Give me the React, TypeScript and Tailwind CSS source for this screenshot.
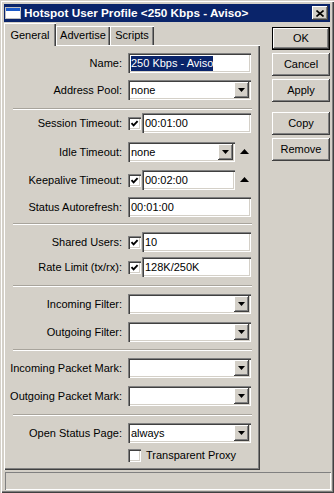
import React from "react";

const sunken =
  "shadow-[inset_1px_1px_0_#808080,inset_2px_2px_0_#404040,inset_-1px_-1px_0_#ffffff,inset_-2px_-2px_0_#d4d0c8]";
const raised =
  "shadow-[inset_-1px_-1px_0_#404040,inset_1px_1px_0_#ffffff,inset_-2px_-2px_0_#808080,inset_2px_2px_0_#d4d0c8]";

function DownTri() {
  return (
    <svg width="7" height="4" viewBox="0 0 7 4">
      <path d="M0 0H7L3.5 4Z" fill="#000" />
    </svg>
  );
}

function UpTri() {
  return (
    <svg width="9" height="5" viewBox="0 0 9 5">
      <path d="M0 5H9L4.5 0Z" fill="#000" />
    </svg>
  );
}

function TextBox({ w, children }: { w: string; children?: React.ReactNode }) {
  return (
    <div className={`${w} h-[20px] bg-white ${sunken} flex items-center pl-[3px] whitespace-nowrap overflow-hidden`}>
      {children}
    </div>
  );
}

function Select({ w, children }: { w: string; children?: React.ReactNode }) {
  return (
    <div className={`${w} h-[20px] bg-white ${sunken} flex p-[2px]`}>
      <div className="flex-1 flex items-center pl-[1px] whitespace-nowrap overflow-hidden">{children}</div>
      <div className={`w-[15px] h-[16px] bg-[#d4d0c8] ${raised} flex items-center justify-center`}>
        <DownTri />
      </div>
    </div>
  );
}

function Check({ checked }: { checked?: boolean }) {
  return (
    <div className={`w-[13px] h-[13px] shrink-0 bg-white ${sunken} flex items-center justify-center`}>
      {checked && (
        <svg width="9" height="9" viewBox="0 0 9 9">
          <path d="M1.5 4.2L3.6 6.4L7.6 2.2" stroke="#000" strokeWidth="1.9" fill="none" />
        </svg>
      )}
    </div>
  );
}

function Row({ label, mt, children }: { label: string; mt: string; children?: React.ReactNode }) {
  return (
    <div className={`flex items-center h-[20px] ${mt}`}>
      <div className="w-[118px] text-right whitespace-nowrap">{label}</div>
      <div className="ml-[6px] flex items-center">{children}</div>
    </div>
  );
}

function Sep({ mt }: { mt: string }) {
  return <div className={`${mt} ml-[9px] w-[239px] h-[2px] border-t border-t-[#a8a49c] border-b border-b-white`} />;
}

function Btn({ label, mt, def }: { label: string; mt: string; def?: boolean }) {
  return (
    <div
      className={`${mt} w-[58px] h-[23px] bg-[#d4d0c8] flex items-center justify-center ${
        def ? "border border-black" : ""
      }`}
    >
      <div className={`w-full h-full ${raised} flex items-center justify-center`}>{label}</div>
    </div>
  );
}

export default function App() {
  return (
    <div
      className="w-[334px] h-[493px] bg-[#d4d0c8] px-[4px] pt-[4px] text-[11px] text-black font-['Liberation_Sans',Arial,sans-serif] shadow-[inset_1px_1px_0_#d4d0c8,inset_2px_2px_0_#ffffff,inset_-1px_-1px_0_#404040,inset_-2px_-2px_0_#808080] overflow-hidden"
    >
      {/* title bar */}
      <div className="h-[18px] w-[326px] bg-[#0a246a] flex items-center">
        <div className="ml-[1px] w-[16px] h-[12px] bg-white border border-[#c0c0c0] flex flex-col">
          <div className="h-[3px] bg-[#1c5ac8]" />
        </div>
        <div className="ml-[3px] text-white font-bold text-[11.75px] whitespace-nowrap flex-1">
          Hotspot User Profile &lt;250 Kbps - Aviso&gt;
        </div>
        <div className={`mr-[2px] w-[16px] h-[14px] bg-[#d4d0c8] ${raised} flex items-center justify-center`}>
          <svg width="8" height="7" viewBox="0 0 8 7">
            <path d="M0.5 0.5L7.5 6.5M7.5 0.5L0.5 6.5" stroke="#000" strokeWidth="1.6" />
          </svg>
        </div>
      </div>

      <div className="flex">
        {/* left column */}
        <div className="w-[256px]">
          <div className="flex items-end h-[22px] mt-[1px] relative z-10">
            <div className="w-[52px] h-[23px] -mb-[1px] bg-[#d4d0c8] shadow-[inset_1px_1px_0_#ffffff,inset_-1px_0_0_#404040,inset_-2px_0_0_#808080] flex items-start justify-center pt-[4px]">
              General
            </div>
            <div className="w-[54px] h-[19px] bg-[#ccc8c0] shadow-[inset_1px_1px_0_#ffffff,inset_-1px_0_0_#404040,inset_-2px_0_0_#808080] flex items-center justify-center">
              Advertise
            </div>
            <div className="w-[44px] h-[19px] bg-[#ccc8c0] shadow-[inset_1px_1px_0_#ffffff,inset_-1px_0_0_#404040,inset_-2px_0_0_#808080] flex items-center justify-center">
              Scripts
            </div>
          </div>
          <div className="h-[425px] w-[256px] shadow-[inset_1px_1px_0_#ffffff,inset_-1px_-1px_0_#404040,inset_-2px_-2px_0_#808080] flex flex-col">
            <Row label="Name:" mt="mt-[8px]">
              <TextBox w="w-[123px]">
                <span className="bg-[#0a246a] text-white leading-[15px] inline-block">250 Kbps - Aviso</span>
              </TextBox>
            </Row>
            <Row label="Address Pool:" mt="mt-[7px]">
              <Select w="w-[123px]">none</Select>
            </Row>
            <Sep mt="mt-[8px]" />
            <Row label="Session Timeout:" mt="mt-[3px]">
              <Check checked />
              <div className="ml-[1px]">
                <TextBox w="w-[109px]">00:01:00</TextBox>
              </div>
            </Row>
            <Row label="Idle Timeout:" mt="mt-[9px]">
              <Select w="w-[107px]">none</Select>
              <div className="ml-[5px] mb-[2px]">
                <UpTri />
              </div>
            </Row>
            <Row label="Keepalive Timeout:" mt="mt-[8px]">
              <Check checked />
              <div className="ml-[1px]">
                <TextBox w="w-[93px]">00:02:00</TextBox>
              </div>
              <div className="ml-[5px] mb-[2px]">
                <UpTri />
              </div>
            </Row>
            <Row label="Status Autorefresh:" mt="mt-[7px]">
              <TextBox w="w-[123px]">00:01:00</TextBox>
            </Row>
            <Sep mt="mt-[6px]" />
            <Row label="Shared Users:" mt="mt-[7px]">
              <Check checked />
              <div className="ml-[1px]">
                <TextBox w="w-[109px]">10</TextBox>
              </div>
            </Row>
            <Row label="Rate Limit (tx/rx):" mt="mt-[5px]">
              <Check checked />
              <div className="ml-[1px]">
                <TextBox w="w-[109px]">128K/250K</TextBox>
              </div>
            </Row>
            <Sep mt="mt-[8px]" />
            <Row label="Incoming Filter:" mt="mt-[7px]">
              <Select w="w-[123px]" />
            </Row>
            <Row label="Outgoing Filter:" mt="mt-[8px]">
              <Select w="w-[123px]" />
            </Row>
            <Sep mt="mt-[7px]" />
            <Row label="Incoming Packet Mark:" mt="mt-[7px]">
              <Select w="w-[123px]" />
            </Row>
            <Row label="Outgoing Packet Mark:" mt="mt-[8px]">
              <Select w="w-[123px]" />
            </Row>
            <Sep mt="mt-[8px]" />
            <Row label="Open Status Page:" mt="mt-[7px]">
              <Select w="w-[123px]">always</Select>
            </Row>
            <div className="mt-[6px] h-[13px] flex items-center pl-[124px]">
              <Check />
              <span className="ml-[5px] whitespace-nowrap">Transparent Proxy</span>
            </div>
          </div>
        </div>

        {/* right column */}
        <div className="ml-[12px] flex flex-col">
          <Btn label="OK" mt="mt-[5px]" def />
          <Btn label="Cancel" mt="mt-[3px]" />
          <Btn label="Apply" mt="mt-[3px]" />
          <Btn label="Copy" mt="mt-[10px]" />
          <Btn label="Remove" mt="mt-[3px]" />
        </div>
      </div>

      {/* status bar */}
      <div className="mt-[2px] ml-[1px] w-[326px] h-[18px] shadow-[inset_1px_1px_0_#808080,inset_-1px_-1px_0_#ffffff]" />
    </div>
  );
}
